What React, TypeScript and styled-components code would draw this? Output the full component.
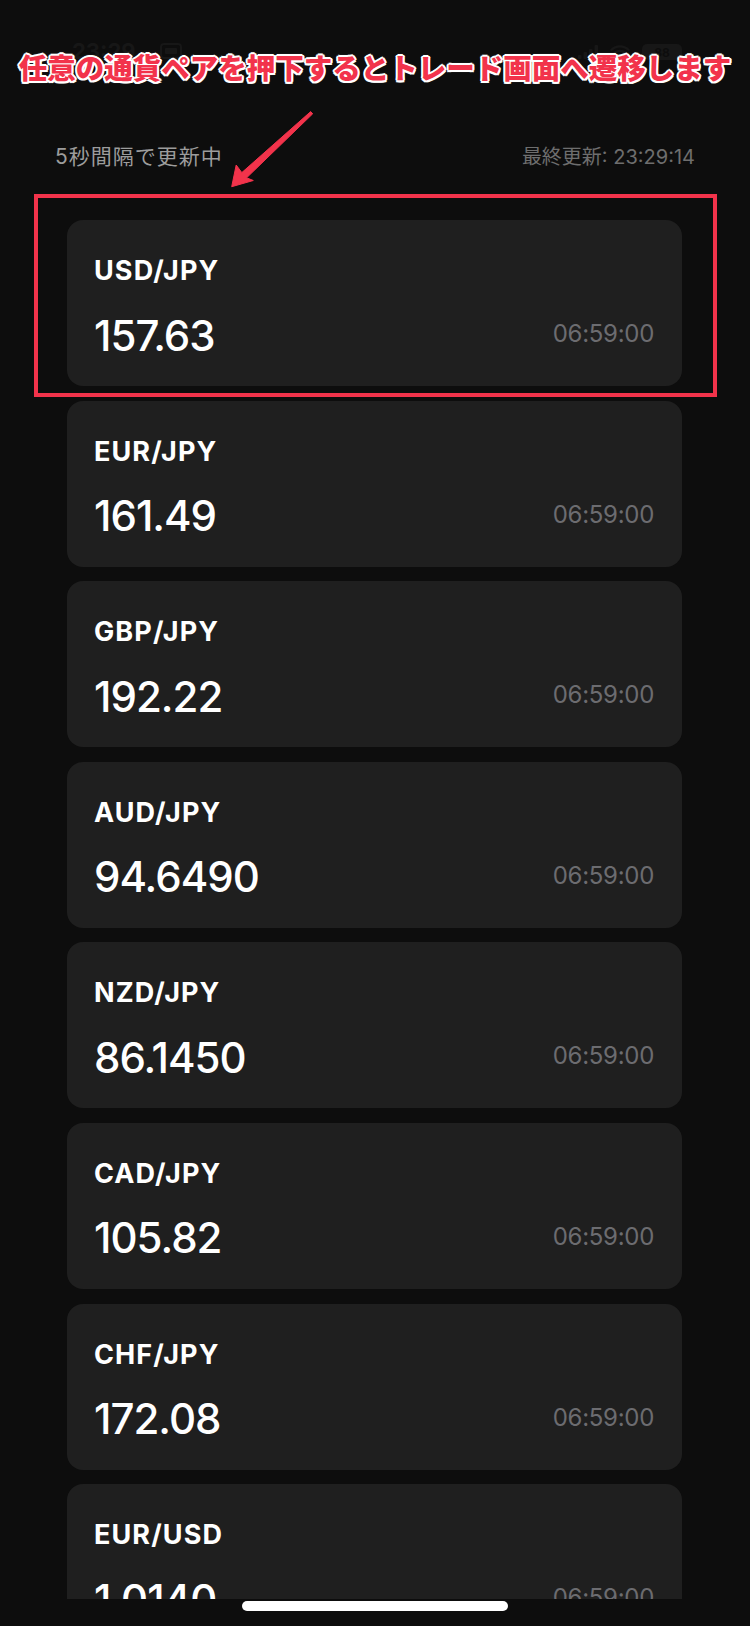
import React from "react";
import styled, { createGlobalStyle } from "styled-components";

const GlobalStyle = createGlobalStyle`
  html, body {
    margin: 0;
    padding: 0;
    background: #0d0d0d;
  }
  body {
    font-family: Inter, "Noto Sans CJK JP", sans-serif;
    -webkit-font-smoothing: antialiased;
  }
`;

const quotes = [
  { pair: "USD/JPY", price: "157.63", time: "06:59:00" },
  { pair: "EUR/JPY", price: "161.49", time: "06:59:00" },
  { pair: "GBP/JPY", price: "192.22", time: "06:59:00" },
  { pair: "AUD/JPY", price: "94.6490", time: "06:59:00" },
  { pair: "NZD/JPY", price: "86.1450", time: "06:59:00" },
  { pair: "CAD/JPY", price: "105.82", time: "06:59:00" },
  { pair: "CHF/JPY", price: "172.08", time: "06:59:00" },
  { pair: "EUR/USD", price: "1.0140", time: "06:59:00" },
];

const RED = "#f2334b";
const DIM = "#171717";

function App() {
  return (
    <>
      <GlobalStyle />
      <Page>
        <StatusBar>
          <StatusLeft>
            <Clock>23:29</Clock>
            <svg width="22" height="16" viewBox="0 0 22 16">
              <rect x="1" y="1" width="20" height="14" rx="3" fill="none" stroke={DIM} strokeWidth="2" />
              <rect x="5" y="5" width="12" height="6" rx="1" fill={DIM} />
            </svg>
          </StatusLeft>
          <StatusRight>
            <svg width="20" height="14" viewBox="0 0 20 14">
              <rect x="0" y="10" width="3.5" height="4" rx="1" fill={DIM} />
              <rect x="5.5" y="7" width="3.5" height="7" rx="1" fill={DIM} />
              <rect x="11" y="4" width="3.5" height="10" rx="1" fill={DIM} />
              <rect x="16.5" y="0" width="3.5" height="14" rx="1" fill={DIM} />
            </svg>
            <svg width="20" height="15" viewBox="0 0 20 15">
              <path d="M10 14 L7 10.5 A4.5 4.5 0 0 1 13 10.5 Z" fill={DIM} />
              <path d="M4.5 8 A8 8 0 0 1 15.5 8" fill="none" stroke={DIM} strokeWidth="2.2" strokeLinecap="round" />
              <path d="M1.5 4.8 A12.5 12.5 0 0 1 18.5 4.8" fill="none" stroke={DIM} strokeWidth="2.2" strokeLinecap="round" />
            </svg>
            <Battery>
              <BatteryLevel>88</BatteryLevel>
            </Battery>
          </StatusRight>
        </StatusBar>

        <Header>
          <Interval>5秒間隔で更新中</Interval>
          <Updated>最終更新: 23:29:14</Updated>
        </Header>

        <List>
          {quotes.map((q) => (
            <Card key={q.pair}>
              <Pair>{q.pair}</Pair>
              <PriceRow>
                <Price>{q.price}</Price>
                <Time>{q.time}</Time>
              </PriceRow>
            </Card>
          ))}
        </List>

        <BottomBar>
          <HomeIndicator />
        </BottomBar>

        {/* 注釈レイヤー */}
        <Banner>任意の通貨ペアを押下するとトレード画面へ遷移します</Banner>
        <Highlight />
        <ArrowSvg width="750" height="1626" viewBox="0 0 750 1626">
          <polygon
            points="312.7,113.8 246.6,177.8 253.3,180.5 231.7,186.7 236.2,165 241.8,172.6 310.7,111.6"
            fill={RED}
            stroke={RED}
            strokeWidth="1"
            strokeLinejoin="round"
          />
        </ArrowSvg>
      </Page>
    </>
  );
}

export default App;

const Page = styled.div`
  position: relative;
  width: 750px;
  height: 1626px;
  overflow: hidden;
  background: #0d0d0d;
  display: flex;
  flex-direction: column;
`;

const StatusBar = styled.div`
  height: 100px;
  flex-shrink: 0;
  display: flex;
  justify-content: space-between;
  align-items: flex-start;
  padding: 40px 68px 0 72px;
  box-sizing: border-box;
`;

const StatusLeft = styled.div`
  display: flex;
  align-items: center;
  gap: 24px;
`;

const Clock = styled.span`
  font-size: 22px;
  font-weight: 700;
  color: ${DIM};
  line-height: 22px;
`;

const StatusRight = styled.div`
  display: flex;
  align-items: center;
  gap: 12px;
  padding-top: 4px;
`;

const Battery = styled.div`
  width: 40px;
  height: 16px;
  border-radius: 5px;
  background: ${DIM};
  display: flex;
  align-items: center;
  justify-content: center;
`;

const BatteryLevel = styled.span`
  font-size: 12px;
  font-weight: 700;
  color: #0d0d0d;
`;

const Header = styled.div`
  height: 110px;
  flex-shrink: 0;
  display: flex;
  justify-content: space-between;
  align-items: center;
  padding: 0 55px;
`;

const Interval = styled.span`
  font-size: 21px;
  color: #9c9c9c;
  letter-spacing: 1px;
`;

const Updated = styled.span`
  font-size: 20px;
  color: #6e6e6e;
`;

const List = styled.div`
  flex: 1;
  min-height: 0;
  overflow: hidden;
  display: flex;
  flex-direction: column;
  gap: 14.6px;
  padding: 10px 68px 0 67px;
`;

const Card = styled.div`
  flex-shrink: 0;
  height: 166px;
  box-sizing: border-box;
  background: #1f1f1f;
  border-radius: 16px;
  padding: 37px 28px 0 27px;
  display: flex;
  flex-direction: column;
`;

const Pair = styled.div`
  font-size: 27px;
  line-height: 27px;
  font-weight: 700;
  color: #ffffff;
  letter-spacing: 1.1px;
`;

const PriceRow = styled.div`
  margin-top: 30.5px;
  display: flex;
  justify-content: space-between;
  align-items: center;
`;

const Price = styled.span`
  font-size: 42px;
  line-height: 42px;
  font-weight: 500;
  color: #ffffff;
  letter-spacing: -1px;
`;

const Time = styled.span`
  font-size: 24px;
  line-height: 24px;
  color: #6c6c70;
  letter-spacing: -0.3px;
  margin-top: -3px;
`;

const BottomBar = styled.div`
  height: 27px;
  flex-shrink: 0;
  display: flex;
  justify-content: center;
`;

const HomeIndicator = styled.div`
  width: 266px;
  height: 10px;
  margin-top: 2px;
  border-radius: 5px;
  background: #ffffff;
`;

const Banner = styled.div`
  position: absolute;
  top: 48px;
  left: 0;
  right: 0;
  text-align: center;
  font-family: "Noto Sans CJK JP", sans-serif;
  font-size: 28.5px;
  line-height: 38px;
  font-weight: 900;
  color: ${RED};
  text-shadow:
    2px 0 0 #fff, -2px 0 0 #fff, 0 2px 0 #fff, 0 -2px 0 #fff,
    1.5px 1.5px 0 #fff, -1.5px 1.5px 0 #fff, 1.5px -1.5px 0 #fff, -1.5px -1.5px 0 #fff,
    0 0 3px rgba(255, 255, 255, 0.8);
`;

const Highlight = styled.div`
  position: absolute;
  left: 34px;
  top: 194px;
  width: 683px;
  height: 203px;
  box-sizing: border-box;
  border: 4px solid ${RED};
  pointer-events: none;
`;

const ArrowSvg = styled.svg`
  position: absolute;
  left: 0;
  top: 0;
  pointer-events: none;
`;
